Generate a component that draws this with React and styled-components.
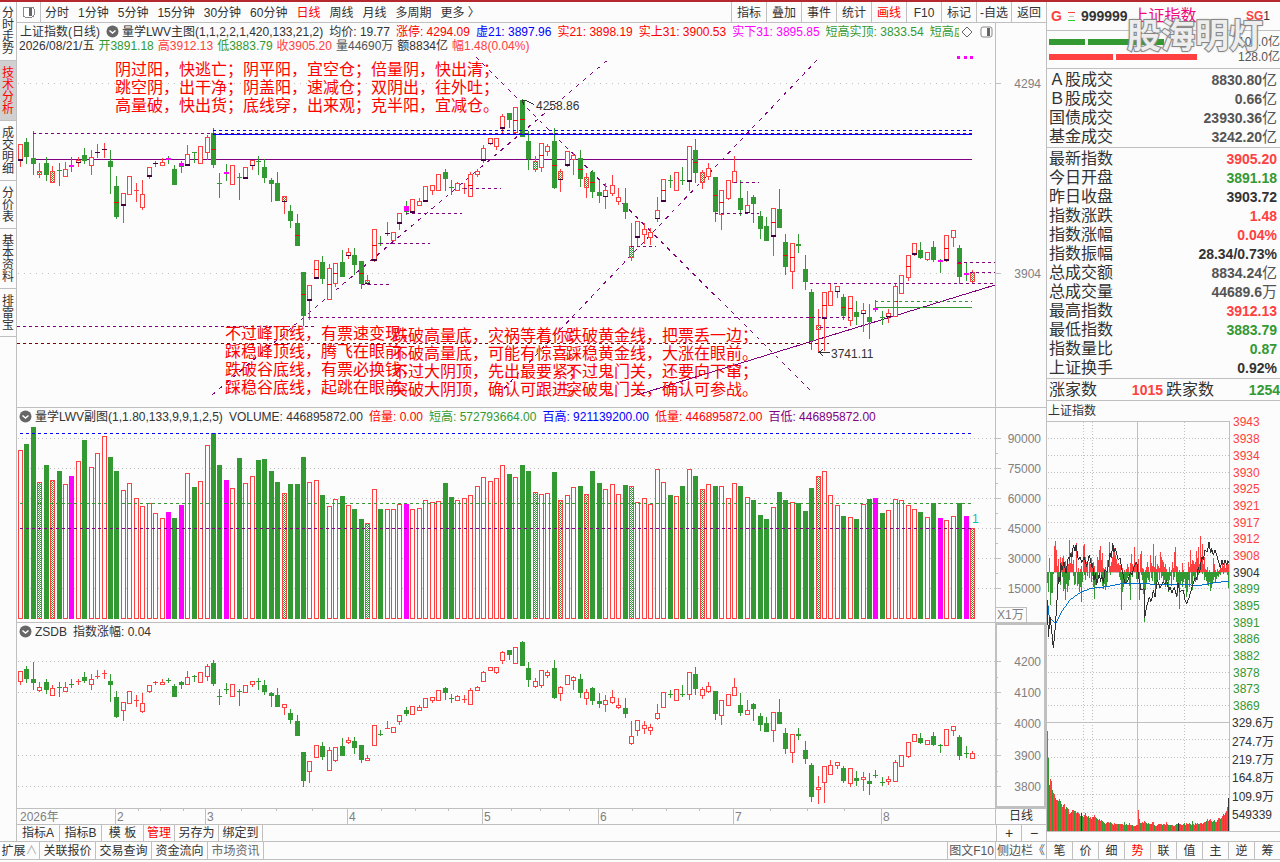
import React from 'react'
import styled, {createGlobalStyle, css} from 'styled-components'

const RED = '#ff4040'
const GREEN = '#339933'
const LINE = '#c0c0c0'
const PURPLE = '#800080'

const GlobalStyle = createGlobalStyle`
    * {
        box-sizing: border-box;
    }

    body {
        margin: 0;
        background: #fcfcfc;
        color: #333;
        font-family: 'Liberation Sans', 'Noto Sans CJK SC', sans-serif;
        font-size: 12px;
        line-height: 16px;
    }

    button {
        margin: 0;
        padding: 0;
        border: none;
        background: none;
        color: inherit;
        font: inherit;
        cursor: pointer;
        white-space: nowrap;
    }

    svg {
        display: block;
        shape-rendering: crispEdges;
    }
`

const Page = styled.div`
    display: flex;
    flex-direction: column;
    min-height: 100vh;
    border-top: 2px solid #b4282e;
`

const Columns = styled.div`
    display: flex;
`

const LeftSide = styled.div`
    flex: 1;
    min-width: 0;
`

const Upper = styled.div`
    display: flex;
    border-bottom: 1px solid ${LINE};
`

const Rail = styled.nav`
    display: flex;
    flex-direction: column;
    width: 17px;
    border-right: 1px solid ${LINE};
`

const RailTab = styled.button`
    padding: 6px 2px 5px;
    border-bottom: 1px solid ${LINE};
    line-height: 12px;
    white-space: normal;
    word-break: break-all;

    &:first-child {
        padding-top: 5px;
    }

    ${props => props.$active && css`
        background: #d0d0d0;
        color: #f00;
    `}
`

const Center = styled.main`
    flex: 1;
    min-width: 0;
`

const Toolbar = styled.div`
    display: flex;
    justify-content: space-between;
    height: 21px;
    border-bottom: 1px solid ${LINE};
`

const Periods = styled.div`
    display: flex;
    align-items: center;
    gap: 9px;
`

const Period = styled.button`
    padding-top: 1px;
    color: ${props => props.$active ? '#f00' : '#333'};
`

const PanelToggle = styled.button`
    display: flex;
    align-items: center;
    justify-content: center;
    width: 24px;
    height: 20px;
    margin-right: -5px;
    border-right: 1px solid ${LINE};
`

const Tools = styled.div`
    display: flex;
`

const Tool = styled.button`
    width: 35px;
    padding-top: 1px;
    border-left: 1px solid ${LINE};
    color: ${props => props.$active ? '#f00' : '#333'};
`

const Pane = styled.section`
    display: flex;
    border-bottom: 1px solid ${LINE};
`

const Plot = styled.div`
    position: relative;
    flex: 1;
    min-width: 0;
`

const Legend = styled.div`
    display: flex;
    align-items: center;
    height: 16px;
    padding: 1px 2px 0;
    gap: 3px;
    white-space: nowrap;

    svg {
        flex: none;
        shape-rendering: auto;
    }
`

const LegendTitle = styled.span`
    padding: 0 3px 0 1px;
`

const LegendText = styled.div`
    display: flex;
    flex: 1;
    gap: 6px;
    min-width: 0;
    overflow: hidden;
`

const DayLine = styled.div`
    display: flex;
    height: 14px;
    gap: 4px;
    padding-left: 2px;
    line-height: 14px;
    white-space: nowrap;
    overflow: hidden;
`

const Tint = styled.span`
    color: ${props => props.$color};
`

const Verse = styled.p`
    position: absolute;
    left: ${props => props.$left}px;
    top: ${props => props.$top}px;
    margin: 0;
    color: #f00;
    font-size: 16px;
    line-height: 18px;
    white-space: pre;
`

const Axis = styled.div`
    width: 51px;
    border-left: 1px solid ${LINE};

    ${props => props.$selected && css`
        border: 2px solid ${LINE};
    `}
`

const DateRow = styled.div`
    display: flex;
    height: 16px;
    border-bottom: 1px solid ${LINE};
`

const PeriodCell = styled.button`
    width: 51px;
    border-left: 1px solid ${LINE};
    line-height: 15px;
`

const TabRow = styled.div`
    display: flex;
    height: 16px;
    line-height: 16px;
`

const Tab = styled.button`
    width: ${props => props.$width}px;
    border-right: 1px solid ${LINE};
    color: ${props => props.$color || '#333'};
`

const Spacer = styled.div`
    flex: 1;
`

const ZoomButton = styled.button`
    width: 25px;
    border-left: 1px solid ${LINE};
    font-size: 14px;
`

const StatusBar = styled.div`
    display: flex;
    height: 18px;
    border-bottom: 1px solid ${LINE};
`

const StatusLink = styled.button`
    width: ${props => props.$width}px;
    border-left: 1px solid ${LINE};
    color: #555;
`

const Side = styled.aside`
    width: 234px;
    border-left: 1px solid ${LINE};
`

const Heading = styled.header`
    position: relative;
    display: flex;
    align-items: center;
    height: 29px;
    padding: 0 10px 0 4px;
    gap: 5px;
    border-bottom: 1px solid ${LINE};
    font-size: 14px;
    font-weight: bold;
`

const StockName = styled.span`
    color: #f0087f;
    font-size: 16px;
    font-weight: normal;
`

const Badge = styled.span`
    margin-left: auto;
    color: ${RED};
    font-size: 12px;

    span {
        color: #333;
        font-weight: normal;
    }
`

const Watermark = styled.div`
    position: absolute;
    left: 80px;
    top: 14px;
    color: rgba(255, 255, 255, .85);
    font-size: 34px;
    font-weight: bold;
    line-height: 40px;
    paint-order: stroke fill;
    -webkit-text-stroke: 2px #888;
    text-shadow: 0 0 3px #888;
    white-space: nowrap;
`

const Depth = styled.div`
    height: 38px;
    padding: 3px 0 0 2px;
    border-bottom: 1px solid ${LINE};
`

const DepthRow = styled.div`
    display: flex;
    align-items: center;
    height: 15px;
    gap: 3px;
    color: #555;

    span {
        margin-left: auto;
    }
`

const DepthBar = styled.i`
    width: ${props => props.$width}px;
    height: 6px;
    background: ${props => props.$color};
`

const Quotes = styled.table`
    width: 100%;
    padding: 1px 0;
    border-spacing: 0;
    border-bottom: 1px solid ${LINE};
`

const QuoteRow = styled.tr`
    height: 19px;

    th,
    td {
        height: 19px;
        padding: 0 3px 0 2px;
        line-height: 18px;
        vertical-align: middle;
    }

    th {
        font-size: 16px;
        font-weight: normal;
        text-align: left;
    }

    td {
        color: ${props => props.$color || '#333'};
        font-size: 14px;
        font-weight: bold;
        text-align: right;
    }
`

const Unit = styled.span`
    font-size: 15px;
    font-weight: normal;
    line-height: 1px;
`

const Breadth = styled.div`
    display: grid;
    grid-template-columns: auto 1fr auto 1fr;
    align-items: center;
    height: 22px;
    padding: 0 0 0 2px;
    column-gap: 3px;
    border-bottom: 1px solid ${LINE};
    font-size: 16px;

    b {
        font-size: 14px;
        text-align: right;
    }
`

const IntradayTitle = styled.div`
    height: 20px;
    padding-left: 1px;
    line-height: 20px;
`

const SideTabs = styled.div`
    display: flex;
    height: 19px;
    margin-top: 9px;
    border-top: 1px solid ${LINE};
    border-bottom: 1px solid ${LINE};
`

const SideTab = styled.button`
    flex: 1;
    border-right: 1px solid ${LINE};
    color: ${props => props.$active ? '#f00' : '#333'};

    &:last-child {
        border-right: none;
    }
`

// kind, body top, body bottom, high, low; three units to a pixel of the lower pane
const DAYS = `
R154,184,154,197 G150,179,141,192 G180,191,129,212 R205,211,190,218 G189,212,178,224 R206,227,196,227
G203,203,189,234 R202,215,187,215 G193,193,178,207 R184,187,178,197 G174,186,160,191 R178,193,164,212
R169,169,153,180 R162,162,152,180 G186,197,165,249 G234,293,214,297 R248,271,248,305 R214,250,214,250
R241,241,228,264 R250,275,222,281 R197,215,197,221 R190,190,186,197 R187,193,180,195 G181,181,176,191
G201,233,193,233 G189,197,186,210 R172,193,156,193 G169,169,168,189 R157,190,157,190 R139,169,135,185
G132,194,123,200 G229,229,210,258 G208,208,192,224 R193,230,193,230 G216,216,209,261 R197,218,197,218
R184,193,184,203 G186,186,177,212 G198,218,183,228 G222,231,218,264 G228,263,207,263 R254,262,254,288
G282,302,270,315 G306,350,288,350 G399,485,399,503 R424,454,424,492 R376,412,376,412 G381,413,369,422
R391,451,384,451 R382,421,382,429 G381,410,357,410 R361,367,354,374 G366,386,354,405 G378,422,378,432
R415,421,406,425 R316,377,316,381 G343,343,331,350 R325,325,304,330 R322,338,322,341 R286,305,286,318
G273,284,262,290 R259,284,259,284 R262,271,258,271 R235,263,235,263 R233,241,233,251 R211,241,211,241
G207,221,202,243 G236,236,223,251 R229,241,226,241 R238,238,228,250 R211,253,207,253 R205,211,201,216
R160,185,156,189 R142,151,142,156 R142,157,142,164 R100,122,96,135 G93,108,93,123 R82,131,82,131
G69,140,66,140 G147,182,129,204 R186,201,177,207 R151,197,151,207 R157,167,153,177 G147,237,123,240
R205,221,201,246 R166,194,166,197 R175,182,171,212 G180,221,165,236 R217,236,210,258 G207,245,204,258
G246,254,222,267 R241,254,228,279 R232,248,213,254 R256,263,237,270 G267,284,237,297 R349,371,306,378
R301,332,301,351 R316,326,306,345 R322,332,315,348 R280,296,255,303 R220,263,220,263 G223,223,213,237
R208,242,208,242 G223,223,198,233 R157,224,157,243 G165,209,144,228 R208,227,204,239 R199,215,189,222
G216,284,216,303 R241,287,241,318 R223,257,223,261 R205,227,177,227 G258,281,222,291 R271,284,243,284
G255,269,252,306 G291,317,282,336 G312,339,294,339 R277,331,277,369 G279,315,240,315 G342,390,327,405
R343,398,343,432 G345,350,327,363 G393,419,366,435 G438,533,432,549 R502,509,471,555 R439,488,439,551
R436,463,423,463 R427,437,427,450 G447,485,441,492 R445,491,445,503 G477,486,456,501 R472,479,459,515
G486,495,462,528 G468,468,453,477 G487,487,474,501 R478,485,471,497 R427,485,423,485 R406,440,406,440
R367,410,367,417 R343,365,343,369 G357,372,342,375 R361,374,361,378 G351,377,339,380 G376,376,375,402
R328,377,328,381 R319,332,319,351 G354,410,348,423 G401,401,381,417 R400,416,396,420`.trim().split(/\s+/).map(s => {
    const [bt, bb, h, l] = s.slice(1).split(',').map(n => 4200 - (n - 124) / 3 / 0.3125)
    return {up: s[0] === 'R', bt, bb, h, l}
})

// bar kind and its top, three units to a pixel; M is a halved day, D a doubled one
const VOLUMES = `
R136 G117 G66 D231 G180 D226 G198 R238 M213 R169 G105 R187 R145 R94 G156 G198 R256 R235 R280 R304
R295 R325 R340 M321 G339 M300 R205 G246 R229 R121 G84 G180 M225 R250 G159 R235 R214 G165 G162 G198
G231 D265 G237 G237 G156 R232 R226 G270 R304 R283 G273 R301 G312 G342 D354 R253 G312 R313 R313 R298
M297 R313 R310 R286 R292 R289 G234 G276 R286 R280 R271 R244 R217 R229 R220 R181 G207 R217 G180 G198
D262 R268 R265 G201 D286 R271 R247 G243 D267 G198 G234 R253 R238 R268 G240 D244 R292 R280 R298 R193
R232 G270 R274 G243 R193 G213 D252 R238 G243 R244 R280 R235 G243 R277 G285 G330 G342 R307 G261 G285
R292 G294 G318 G249 D213 R199 R271 R301 G333 R337 G342 R298 G282 M279 G324 R316 R283 R286 R301 R313
G321 R337 G294 M339 R346 R334 G294 M333 D370`.trim().split(/\s+/).map(s => ({kind: s[0], top: 405 + Math.floor(s.slice(1) / 3)}))

const HALF = [15, 30, 43, 44, 46, 48, 49, 53, 55, 70, 77, 78, 81, 83, 87, 89, 100, 105, 108, 109, 117, 119, 120, 123, 125, 128, 129, 136, 138, 144, 146]
const FOOT = [0, 9, 12, 13, 16, 20, 21, 26, 35, 36, 41, 45, 46, 51, 54, 55, 57, 59, 61, 63, 72, 73, 75, 84, 85, 91, 96, 99, 100, 104, 113, 117, 125, 127, 131, 135, 139, 144]

const dayX = i => Math.round(20 + i * 6.432)
const yMain = p => Math.round(83 + (4294 - p) * 0.4872)
const yLow = p => Math.floor(661 + (4200 - p) * 0.3125)

const DotFill = () => (
    <defs>
        <pattern id="dots" width="2" height="2" patternUnits="userSpaceOnUse">
            <rect width="2" height="2" fill="#fff" />
            <rect width="1" height="1" fill={GREEN} />
            <rect x="1" y="1" width="1" height="1" fill={GREEN} />
        </pattern>
    </defs>
)

const Candle = ({day, i, y, rich}) => {
    const x = dayX(i)
    const top = y(day.bt)
    const bottom = y(day.bb)
    const color = day.up ? RED : GREEN
    const kind = VOLUMES[i].kind
    const height = Math.max(bottom - top, 1)
    return (
        <g>
            <rect x={x} y={y(day.h)} width="1" height={Math.max(y(day.l) - y(day.h), 1)} fill={color} />
            {day.up && height > 1
                ? <rect x={x - 1.5} y={top + 0.5} width="4" height={height} fill={rich && kind === 'D' ? 'url(#dots)' : '#fcfcfc'} stroke={RED} />
                : <rect x={x - 2} y={top} width="5" height={height} fill={color} />}
            {rich && kind === 'M' && <rect x={x - 2} y={top} width="5" height={Math.max(height - 1, 2)} fill="#f0f" />}
            {rich && HALF.includes(i) && <rect x={x - 2} y={Math.round((top + bottom) / 2)} width="5" height="1" fill="#f00" />}
            {rich && FOOT.includes(i) && <rect x={x - 2} y={bottom - (height > 8 ? 1 : 0)} width="5" height={height > 8 ? 2 : 1} fill="#400040" />}
        </g>
    )
}

const Grid = ({ys, x1, x2, dash = '1 3'}) => ys.map(y => (
    <line key={y} x1={x1} x2={x2} y1={y + 0.5} y2={y + 0.5} stroke={LINE} strokeDasharray={dash} />
))

// x1, x2, y, colour
const LEVELS = [
    [33, 213, 133, PURPLE], [213, 972, 130, '#00f'], [213, 972, 133, PURPLE],
    [17, 314, 326, PURPLE], [17, 829, 343, '#800000'], [308, 850, 317, PURPLE],
    [362, 392, 284, PURPLE], [380, 430, 243, PURPLE], [406, 462, 213, PURPLE],
    [464, 501, 188, PURPLE], [631, 656, 246, PURPLE], [715, 759, 213, PURPLE],
    [734, 759, 182, PURPLE], [820, 850, 327, PURPLE], [810, 995, 283, PURPLE],
    [958, 995, 262, PURPLE], [970, 995, 272, PURPLE], [875, 972, 301, GREEN],
]

const MainChart = () => (
    <svg viewBox="17 53 978 354" width="100%" height="354" preserveAspectRatio="xMinYMin meet">
        <DotFill />
        <Grid ys={[83, 273]} x1={18} x2={995} dash="1 5" />
        <g stroke={PURPLE}>
            <path d="M33 159.5H972" />
            <path d="M637 395L995 285" />
            <path d="M212 395L610 58M476 57L814 394M498 395L819 58" fill="none" strokeDasharray="4 5" />
        </g>
        {DAYS.map((day, i) => <Candle key={i} day={day} i={i} y={yMain} rich />)}
        {LEVELS.map(([x1, x2, y, c], k) => (
            <line key={k} x1={x1} x2={x2} y1={y + 0.5} y2={y + 0.5} stroke={c} strokeDasharray="3 3" />
        ))}
        <path d="M213 134.5H972" stroke="#00f" />
        <path d="M875 307.5H972M875.5 301V312" stroke={GREEN} />
        <path d="M957 56h3v3h-3zM964 56h3v3h-3zM970 56h3v3h-3z" fill="#f0f" />
        <path d="M522 100.5h4l8 4M522 100l2 5M830 352.5H819l4-3M819 352l4 4" fill="none" stroke="#333" />
        <g fill="#333" fontSize="12">
            <text x="536" y="110">4258.86</text>
            <text x="831" y="358">3741.11</text>
        </g>
    </svg>
)

const VolumeChart = () => (
    <svg viewBox="17 424 978 198" width="100%" height="198" preserveAspectRatio="xMinYMin meet">
        <Grid ys={[438, 468, 498, 528, 558, 588]} x1={18} x2={995} dash="1 3" />
        {VOLUMES.map((v, i) => {
            const x = dayX(i)
            if (v.kind === 'G' || v.kind === 'M') {
                return <rect key={i} x={x - 2} y={v.top} width="5" height={619 - v.top} fill={v.kind === 'G' ? GREEN : '#f0f'} />
            }
            return <rect key={i} x={x - 1.5} y={v.top + 0.5} width="4" height={618 - v.top} fill={v.kind === 'D' ? 'url(#dots)' : '#fcfcfc'} stroke={RED} />
        })}
        <g strokeDasharray="3 3">
            <path d="M20 433.5H972" stroke="#00f" />
            <path d="M20 503.5H972" stroke={GREEN} />
            <path d="M20 528.5H972" stroke={PURPLE} />
        </g>
        <text x="972" y="523" fontSize="12" fill="#00c0c0">1</text>
    </svg>
)

const ChangeChart = () => (
    <svg viewBox="17 639 978 169" width="100%" height="169" preserveAspectRatio="xMinYMin meet">
        <Grid ys={[661, 692, 723, 755, 786]} x1={18} x2={995} dash="1 3" />
        {DAYS.map((day, i) => <Candle key={i} day={day} i={i} y={yLow} />)}
    </svg>
)

const Scale = ({top, height, marks, minor = [], inset = 0, children}) => (
    <svg viewBox={`${996 + inset} ${top + inset * 2} ${50 - inset * 3} ${height - inset * 4}`} width={50 - inset * 3} height={height - inset * 4}>
        {marks.map(([label, y]) => (
            <g key={label}>
                <path d={`M996 ${y + 0.5}h5`} stroke={LINE} />
                <text x="1041" y={y + 5} textAnchor="end" fontSize="12" fill="#808080">{label}</text>
            </g>
        ))}
        {minor.map(y => <path key={y} d={`M996 ${y + 0.5}h2`} stroke={LINE} />)}
        {children}
    </svg>
)

const MONTHS = [[2, 115], [3, 205], [4, 347], [5, 482], [6, 598], [7, 733], [8, 881]]
const WEEKS = [138, 160, 183, 241, 276, 312, 381, 415, 448, 511, 540, 569, 632, 666, 699, 770, 807, 844]

const DateScale = () => (
    <svg viewBox="17 809 978 15" width="100%" height="15" preserveAspectRatio="xMinYMin meet">
        <g fontSize="12" fill="#808080">
            <text x="20" y="821">2026年</text>
            {MONTHS.map(([m, x]) => (
                <React.Fragment key={m}>
                    <path d={`M${x + 0.5} 809v15`} stroke={LINE} />
                    <text x={x + 2} y="821">{m}</text>
                </React.Fragment>
            ))}
            {WEEKS.map(x => <path key={x} d={`M${x + 0.5} 809v2`} stroke={LINE} />)}
        </g>
    </svg>
)

const UPS = [
    0, 0, 14, 0, 0, 0, 0, 26, 31, 22, 6, 13, 0, 15, 10, 14, 16, 9, 11, 5, 7, 8, 32, 9, 20, 8, 12, 0, 0, 29,
    0, 4, 0, 3, 6, 0, 26, 28, 15, 10, 8, 0, 10, 8, 14, 9, 10, 6, 0, 0, 15, 12, 22, 26, 12, 19, 4, 3, 5, 0,
    12, 0, 30, 6, 10, 15, 20, 24, 17, 13, 8, 9, 7, 7, 0, 4, 0, 2, 0, 3, 8, 5, 0, 9, 18, 8, 6, 25, 10, 8,
    0, 13, 0, 18, 21, 4, 3, 0, 2, 5, 10, 5, 0, 17, 9, 6, 28, 5, 16, 3, 8, 6, 4, 20, 15, 12, 10, 5, 8, 3,
    0, 0, 5, 0, 2, 10, 4, 20, 25, 6, 5, 0, 2, 0, 0, 9, 2, 0, 0, 0, 0, 10, 5, 22, 8, 12, 11, 8, 10, 21,
    14, 25, 8, 36, 12, 28, 8, 15, 3, 2, 5, 0, 2, 0, 0, 0, 14, 8, 2, 0, 3, 1, 2, 5, 4, 8, 6, 10, 4, 7, 12, 8,
]

const DOWNS = [
    11, 20, 0, 33, 21, 21, 2, 0, 0, 0, 15, 12, 8, 13, 0, 5, 19, 17, 28, 12, 20, 14, 8, 0, 0, 0, 4, 13, 12, 0,
    14, 12, 20, 15, 30, 10, 0, 3, 8, 0, 4, 0, 6, 0, 10, 4, 15, 27, 13, 9, 8, 0, 4, 0, 6, 14, 17, 12, 18, 15,
    10, 0, 0, 3, 0, 0, 0, 0, 0, 0, 0, 0, 5, 8, 38, 20, 15, 8, 12, 10, 6, 4, 14, 28, 0, 5, 0, 0, 0, 7,
    10, 4, 28, 0, 3, 8, 22, 50, 18, 12, 6, 8, 10, 0, 6, 9, 0, 12, 20, 14, 9, 0, 8, 0, 6, 4, 10, 8, 15, 12,
    9, 20, 8, 4, 14, 0, 8, 5, 0, 10, 24, 15, 37, 12, 9, 15, 10, 7, 16, 25, 20, 8, 15, 0, 12, 18, 4, 6, 10, 0,
    8, 3, 0, 0, 0, 2, 0, 8, 5, 9, 12, 14, 10, 19, 16, 12, 8, 5, 10, 7, 4, 5, 2, 3, 0, 0, 2, 0, 0, 0, 3, 16,
]

const TURNOVER = [
    100, 73, 46, 52, 50, 41, 38, 37, 33, 31, 31, 30, 32, 30, 27, 24, 26, 27, 22, 24, 23, 22, 17, 18, 19, 21, 21, 20, 20, 18,
    19, 18, 17, 15, 18, 15, 14, 16, 18, 15, 14, 15, 13, 14, 12, 14, 14, 16, 14, 13, 12, 11, 12, 10, 11, 10, 9, 8, 7, 8,
    9, 9, 8, 9, 8, 7, 6, 8, 7, 7, 7, 7, 7, 7, 7, 7, 6, 9, 6, 7, 6, 6, 8, 6, 6, 6, 5, 5, 5, 6,
    6, 21, 12, 8, 8, 9, 8, 10, 9, 8, 7, 8, 7, 7, 7, 9, 9, 6, 5, 5, 6, 7, 7, 7, 7, 6, 7, 7, 6, 9,
    7, 6, 6, 6, 6, 6, 5, 5, 6, 7, 7, 8, 7, 7, 6, 6, 7, 8, 6, 8, 7, 7, 8, 7, 6, 10, 7, 6, 8, 7,
    8, 7, 7, 8, 8, 7, 8, 9, 9, 10, 12, 10, 11, 12, 10, 9, 10, 11, 9, 9, 11, 13, 13, 12, 13, 15, 17, 16, 18, 20, 24, 33,
]

const PRICES = [
    [3943, 421], [3938, 438], [3934, 455], [3930, 472], [3925, 488], [3921, 505], [3917, 522], [3912, 538],
    [3908, 555], [3904, 572], [3899, 588], [3895, 605], [3891, 622], [3886, 638], [3882, 655], [3878, 672],
    [3873, 688], [3869, 705],
]
const LOTS = [['329.6万', 722], ['274.7万', 741], ['219.7万', 759], ['164.8万', 777], ['109.9万', 796], ['549339', 814]]

const priceColor = y => y < 572 ? RED : y > 572 ? GREEN : '#333'

const IntradayChart = () => (
    <svg viewBox="1047 421 233 411" width="100%" height="411" preserveAspectRatio="xMinYMin meet" overflow="visible">
        <Grid ys={PRICES.slice(1).map(p => p[1]).concat([739, 757, 776, 794, 812])} x1={1048} x2={1229} dash="1 2" />
        <path d="M1083.5 422V831M1092.5 422V831M1184.5 422V831" stroke={LINE} strokeDasharray="1 2" />
        <path d="M1047 421.5H1229.5V831M1137.5 421V831M1047 572.5H1229M1047 722.5H1229M1047 831.5H1280" fill="none" stroke={LINE} />
        {UPS.map((h, i) => h > 0 && <rect key={i} x={1047 + i} y={572 - h} width="1" height={h} fill={RED} />)}
        {DOWNS.map((h, i) => h > 0 && <rect key={i} x={1047 + i} y={572} width="1" height={h} fill={GREEN} />)}
        {TURNOVER.map((h, i) => (
            <rect key={i} x={1047 + i} y={831 - h} width="1" height={h} fill={i === 34 || i === 131 || i === 181 ? '#333' : (i * 7 % 11 < 4 && i > 1) || i === 1 ? GREEN : RED} />
        ))}
        <g transform="translate(1040 400) scale(.33333)" fill="none" strokeWidth="3">
            <path stroke="#0070d0" d="M22 600L28 655L48 670L65 635L90 600L120 578L150 566L200 560L240 552L290 550L350 553L400 553L480 556L520 549L568 543" />
            <path stroke="#333" d="M22 600L25 710L30 650L35 690L40 745L45 690L50 620L53 560L57 530L60 545L62 490L66 510L72 485L78 520L85 470L88 482L92 460L96 470L100 435L105 452L108 435L115 480L120 470L125 488L133 470L140 500L148 465L155 500L158 490L162 540L166 520L170 555L178 520L182 545L185 525L190 548L195 510L202 515L210 460L214 475L218 430L222 455L226 445L235 480L240 475L245 505L255 550L262 545L272 515L276 525L282 500L290 485L296 530L303 570L312 565L314 655L320 620L328 590L332 605L335 600L340 570L345 590L352 540L360 565L370 545L375 552L380 540L386 572L390 560L396 580L403 560L410 590L414 550L420 575L430 570L435 600L440 612L448 590L455 565L465 535L470 540L475 500L479 520L485 470L490 480L495 450L502 455L507 425L512 460L515 445L520 465L525 450L533 475L541 505L546 480L550 495L555 480L560 495L564 483L568 490" />
        </g>
        <g fontSize="12">
            {PRICES.map(([p, y]) => <text key={p} x="1233" y={y + 5} fill={priceColor(y)}>{p}</text>)}
            {LOTS.map(([v, y]) => <text key={v} x="1232" y={y + 5} fill="#333">{v}</text>)}
        </g>
    </svg>
)

const PanelIcon = () => (
    <svg width="13" height="12" viewBox="0 0 13 12">
        <rect x="1" y="1" width="11" height="10" rx="2" fill="#fff" stroke="#888" />
        <rect x="7" y="2" width="3" height="8" fill="#666" />
    </svg>
)

const Toggle = () => (
    <svg width="13" height="13" viewBox="0 0 13 13">
        <circle cx="6.5" cy="6.5" r="6" fill="#666" />
        <path d="M3.500 5.500L6.500 8L9.500 5.500" fill="none" stroke="#fff" strokeWidth="1.500" />
    </svg>
)

const RAIL = ['分时走势', '技术分析', '成交明细', '分价表', '基本资料', '排雷宝']
const PERIODS = ['分时', '1分钟', '5分钟', '15分钟', '30分钟', '60分钟', '日线', '周线', '月线', '多周期']
const TOOLS = ['指标', '叠加', '事件', '统计', '画线', 'F10', '标记', '-自选', '返回']
const TABS = [['指标A', 43], ['指标B', 42], ['模 板', 42], ['管理', 31], ['另存为', 44], ['绑定到', 44]]
const LINKS = [['关联报价', 56], ['交易查询', 56], ['资金流向', 56]]
const SIDE_TABS = ['笔', '价', '细', '势', '联', '值', '主', '逆', '筹']

const TOTALS = [['Ａ股成交', '8830.80'], ['Ｂ股成交', '0.66'], ['国债成交', '23930.36'], ['基金成交', '3242.20']]
const QUOTES = [
    ['最新指数', '3905.20', RED], ['今日开盘', '3891.18', GREEN], ['昨日收盘', '3903.72'],
    ['指数涨跌', '1.48', RED], ['指数涨幅', '0.04%', RED], ['指数振幅', '28.34/0.73%'],
    ['总成交额', '8834.24', '#555', '亿'], ['总成交量', '44689.6', '#555', '万'],
    ['最高指数', '3912.13', RED], ['最低指数', '3883.79', GREEN], ['指数量比', '0.87', GREEN], ['上证换手', '0.92%'],
]

const VERSES = [
    [98, 38, '阴过阳，快逃亡；阴平阳，宜空仓；倍量阴，快出清；\n跳空阴，出干净；阴盖阳，速减仓；双阴出，往外吐；\n高量破，快出货；底线穿，出来观；克半阳，宜减仓。'],
    [208, 302, '不过峰顶线，有票速变现；\n踩稳峰顶线，腾飞在眼前。\n跌破谷底线，有票必换钱；\n踩稳谷底线，起跳在眼前。'],
    [375, 304, '跌破高量底，灾祸等着你；\n不破高量底，可能有惊喜。\n不过大阴顶，先出最要紧；\n突破大阴顶，确认可跟进。'],
    [549, 304, '跌破黄金线，把票丢一边；\n踩稳黄金线，大涨在眼前。\n不过鬼门关，还要向下窜；\n突破鬼门关，确认可参战。'],
]

const App = () => (
    <Page>
        <GlobalStyle />
        <Columns>
            <LeftSide>
                <Upper>
                    <Rail>
                        {RAIL.map((t, i) => <RailTab key={t} $active={i === 1}>{t}</RailTab>)}
                    </Rail>
                    <Center>
                        <Toolbar>
                            <Periods>
                                <PanelToggle aria-label="侧栏"><PanelIcon /></PanelToggle>
                                {PERIODS.map(t => <Period key={t} $active={t === '日线'}>{t}</Period>)}
                                <Period>更多 〉</Period>
                            </Periods>
                            <Tools>
                                {TOOLS.map(t => <Tool key={t} $active={t === '画线'}>{t}</Tool>)}
                            </Tools>
                        </Toolbar>

                        <Pane>
                            <Plot>
                                <Legend>
                                    <LegendTitle>上证指数(日线)</LegendTitle>
                                    <Toggle />
                                    <LegendText>
                                        <span>量学LWV主图(1,1,2,2,1,420,133,21,2)</span>
                                        <span>均价: 19.77</span>
                                        <Tint $color="#f00">涨停: 4294.09</Tint>
                                        <Tint $color="#00f">虚21: 3897.96</Tint>
                                        <Tint $color="#f00">实21: 3898.19</Tint>
                                        <Tint $color="#f00">实上31: 3900.53</Tint>
                                        <Tint $color="#f0f">实下31: 3895.85</Tint>
                                        <Tint $color={GREEN}>短高实顶: 3833.54</Tint>
                                        <Tint $color={GREEN}>短高虚顶</Tint>
                                    </LegendText>
                                    <svg width="15" height="12" viewBox="0 0 15 12">
                                        <path d="M5 1L10 6L5 11L0 6Z" fill="none" stroke="#666" />
                                    </svg>
                                    <PanelIcon />
                                </Legend>
                                <DayLine>
                                    <span>2026/08/21/五</span>
                                    <Tint $color={GREEN}>开3891.18</Tint>
                                    <Tint $color={RED}>高3912.13</Tint>
                                    <Tint $color={GREEN}>低3883.79</Tint>
                                    <Tint $color={RED}>收3905.20</Tint>
                                    <Tint $color="#555">量44690万</Tint>
                                    <span>额8834亿</span>
                                    <Tint $color={RED}>幅1.48(0.04%)</Tint>
                                </DayLine>
                                <MainChart />
                                {VERSES.map(([left, top, text]) => <Verse key={left} $left={left} $top={top}>{text}</Verse>)}
                            </Plot>
                            <Axis>
                                <Scale top={23} height={384} marks={[['4294', 83], ['3904', 273]]} />
                            </Axis>
                        </Pane>

                        <Pane>
                            <Plot>
                                <Legend>
                                    <Toggle />
                                    <LegendText>
                                        <span>量学LWV副图(1,1.80,133,9,9,1,2,5)</span>
                                        <span>VOLUME: 446895872.00</span>
                                        <Tint $color="#f00">倍量: 0.00</Tint>
                                        <Tint $color={GREEN}>短高: 572793664.00</Tint>
                                        <Tint $color="#00f">百高: 921139200.00</Tint>
                                        <Tint $color="#f00">低量: 446895872.00</Tint>
                                        <Tint $color={PURPLE}>百低: 446895872.00</Tint>
                                    </LegendText>
                                </Legend>
                                <VolumeChart />
                            </Plot>
                            <Axis>
                                <Scale
                                    top={408}
                                    height={214}
                                    marks={[['90000', 438], ['75000', 468], ['60000', 498], ['45000', 528], ['30000', 558], ['15000', 588]]}
                                    minor={[453, 483, 513, 543, 573]}
                                >
                                    <path d="M996 607.5H1026.500V622" fill="none" stroke={LINE} />
                                    <text x="997" y="619" fontSize="12" fill="#808080">X1万</text>
                                </Scale>
                            </Axis>
                        </Pane>

                        <Pane>
                            <Plot>
                                <Legend>
                                    <Toggle />
                                    <LegendText>
                                        <span>ZSDB</span>
                                        <span>指数涨幅: 0.04</span>
                                    </LegendText>
                                </Legend>
                                <ChangeChart />
                            </Plot>
                            <Axis $selected>
                                <Scale
                                    top={623}
                                    height={185}
                                    inset={1}
                                    marks={[['4200', 661], ['4100', 692], ['4000', 723], ['3900', 755], ['3800', 786]]}
                                    minor={[677, 708, 739, 771]}
                                />
                            </Axis>
                        </Pane>

                        <DateRow>
                            <Plot><DateScale /></Plot>
                            <PeriodCell>日线</PeriodCell>
                        </DateRow>
                        <TabRow>
                            {TABS.map(([t, w]) => <Tab key={t} $width={w} $color={t === '管理' ? '#f00' : '#333'}>{t}</Tab>)}
                            <Spacer />
                            <ZoomButton>+</ZoomButton>
                            <ZoomButton>−</ZoomButton>
                        </TabRow>
                    </Center>
                </Upper>
                <StatusBar>
                    <Tab $width={40}>扩展<Tint $color="#aaa">∧</Tint></Tab>
                    {LINKS.map(([t, w]) => <Tab key={t} $width={w}>{t}</Tab>)}
                    <Tab $width={56} $color="#666">市场资讯</Tab>
                    <Spacer />
                    <StatusLink $width={48}>图文F10</StatusLink>
                    <StatusLink $width={51}>侧边栏《</StatusLink>
                </StatusBar>
            </LeftSide>

            <Side>
                <Heading>
                    <Tint $color={RED}>G</Tint>
                    <svg width="9" height="9" viewBox="0 0 9 9">
                        <path d="M1 .5H8" stroke={RED} />
                        <path d="M2 4.500H7" stroke={LINE} />
                        <path d="M1 8.500H8" stroke="#3c3" />
                    </svg>
                    <span>999999</span>
                    <StockName>上证指数</StockName>
                    <Badge>SG<span>1</span></Badge>
                    <Watermark>股海明灯</Watermark>
                </Heading>
                <Depth>
                    <DepthRow>
                        <DepthBar $width={36} $color={GREEN} />
                        <DepthBar $width={76} $color={GREEN} />
                        <span>100.0亿</span>
                    </DepthRow>
                    <DepthRow>
                        <DepthBar $width={64} $color={RED} />
                        <DepthBar $width={81} $color={RED} />
                        <span>128.0亿</span>
                    </DepthRow>
                </Depth>
                <Quotes>
                    <tbody>
                        {TOTALS.map(([name, value]) => (
                            <QuoteRow key={name} $color="#555">
                                <th scope="row">{name}</th>
                                <td>{value}<Unit>亿</Unit></td>
                            </QuoteRow>
                        ))}
                    </tbody>
                </Quotes>
                <Quotes>
                    <tbody>
                        {QUOTES.map(([name, value, color, unit]) => (
                            <QuoteRow key={name} $color={color}>
                                <th scope="row">{name}</th>
                                <td>{value}{unit && <Unit>{unit}</Unit>}</td>
                            </QuoteRow>
                        ))}
                    </tbody>
                </Quotes>
                <Breadth>
                    <span>涨家数</span>
                    <b><Tint $color={RED}>1015</Tint></b>
                    <span>跌家数</span>
                    <b><Tint $color={GREEN}>1254</Tint></b>
                </Breadth>
                <IntradayTitle>上证指数</IntradayTitle>
                <IntradayChart />
                <SideTabs>
                    {SIDE_TABS.map(t => <SideTab key={t} $active={t === '势'}>{t}</SideTab>)}
                </SideTabs>
            </Side>
        </Columns>
    </Page>
)

export default App
